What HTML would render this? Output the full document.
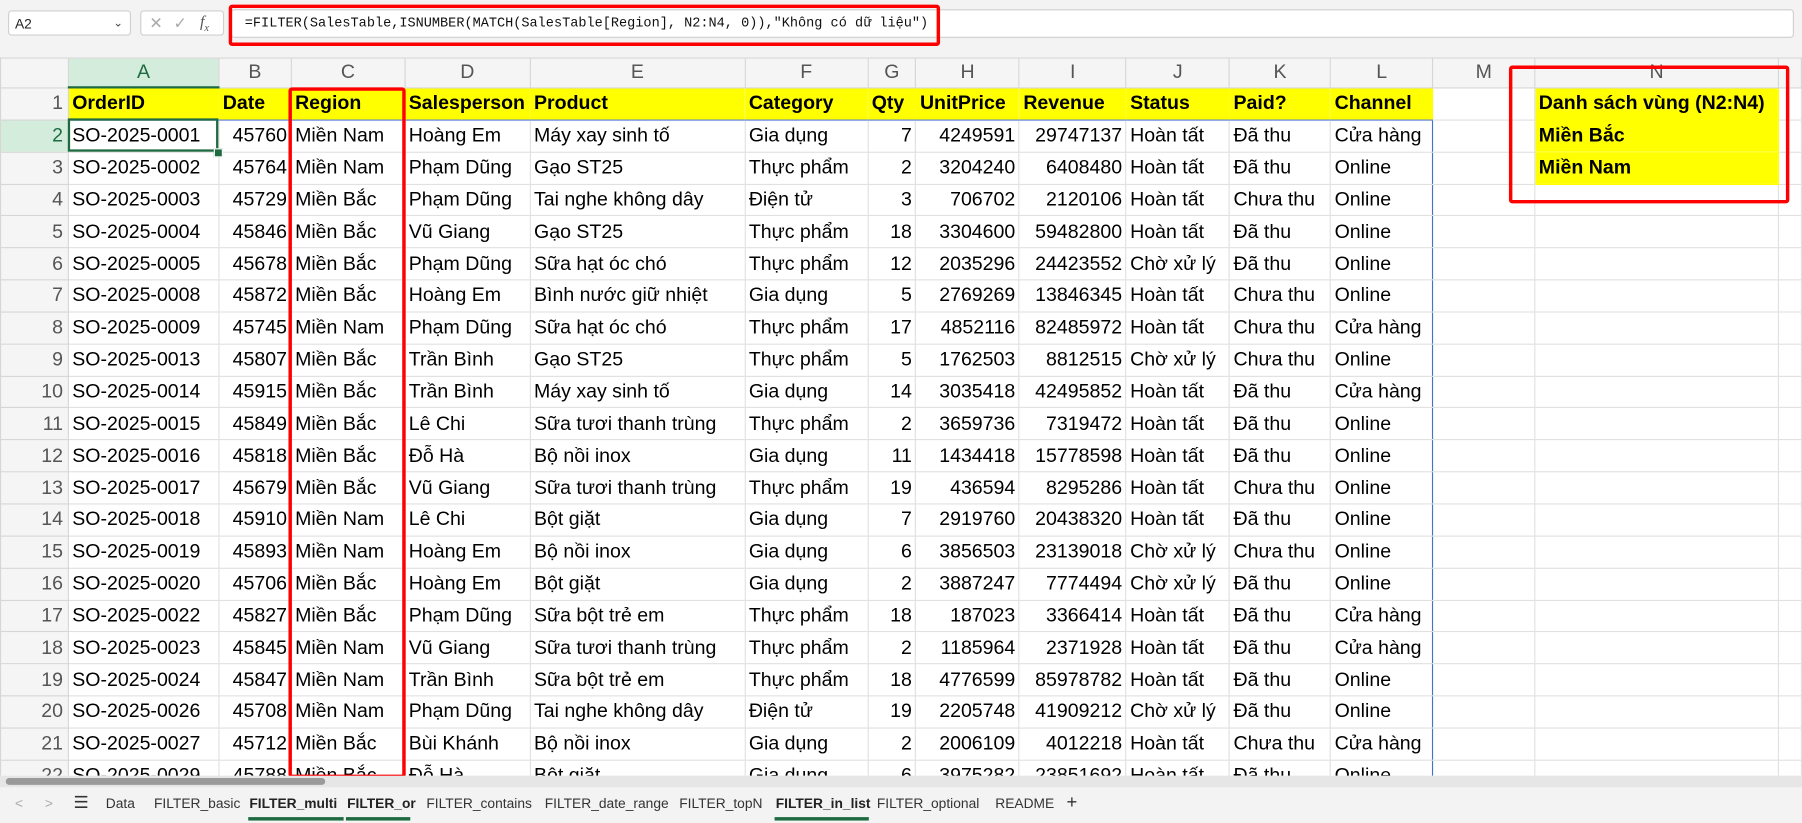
<!DOCTYPE html>
<html><head><meta charset="utf-8">
<style>
html,body{margin:0;padding:0;width:1802px;height:823px;overflow:hidden;background:#f3f3f3}
#w{position:absolute;left:0;top:0;width:1568px;height:716px;transform:scale(1.14923);transform-origin:0 0;font-family:"Liberation Sans",sans-serif;background:#f3f3f3}
.abs{position:absolute}
#sheet{position:absolute;left:0;top:50px;width:1568px;height:625px;overflow:hidden;background:#fff}
table{border-collapse:collapse;table-layout:fixed;font-size:17px}
td{height:26.85px;padding:0 3px;border:1px solid #e1e1e1;white-space:nowrap;overflow:hidden;color:#000;line-height:26px}
tr.hd td{height:24px;line-height:24px}
td.r{text-align:right}
td.h{background:#f5f5f5;color:#555;text-align:center;border-color:#d6d6d6;font-size:17px}
td.rn{background:#f5f5f5;color:#555;text-align:right;padding-right:4px;border-color:#d6d6d6}
tr.y td.c{background:#ffff00;font-weight:bold;border-color:#ffff00;border-bottom:1px solid #5b7fd6}
td.yl{background:#ffff00;font-weight:bold;border-color:#ffff00}
td.bl{border-right:1px solid #4472c4}
.tab{position:absolute;top:690px;font-size:12px;color:#333;line-height:18px;white-space:nowrap}
.tab.b{font-weight:bold;color:#222}
.ul{position:absolute;top:711px;height:3px;background:#1e6b41}
</style></head><body>
<div id="w">
<div class="abs" style="left:7px;top:9px;width:107px;height:22px;background:#fff;border:1px solid #d0d0d0;border-radius:3px;font-size:12px;line-height:22px;color:#222;box-sizing:border-box;padding-left:5px">A2<span style="position:absolute;right:6px;top:0;color:#444;font-size:10px">&#8964;</span></div>
<div class="abs" style="left:122px;top:9px;width:73px;height:22px;background:#fff;border:1px solid #d0d0d0;border-radius:3px;box-sizing:border-box;color:#aaa;font-size:14px;line-height:20px">
<span class="abs" style="left:7px">✕</span><span class="abs" style="left:28px">✓</span><span class="abs" style="left:51px;color:#555;font-style:italic;font-family:'Liberation Serif',serif">f<sub style="font-size:9px">x</sub></span></div>
<div class="abs" style="left:201px;top:8px;width:1360px;height:25px;background:#fff;border:1px solid #d0d0d0;border-radius:3px;box-sizing:border-box"></div>
<div class="abs" style="left:213px;top:11px;font-family:'Liberation Mono',monospace;font-size:11.8px;line-height:18px;color:#111;white-space:nowrap">=FILTER(SalesTable,ISNUMBER(MATCH(SalesTable[Region], N2:N4, 0)),"Không có dữ liệu")</div>
<div class="abs" style="left:199px;top:4px;width:619px;height:36px;border:3px solid #f00;border-radius:3px;box-sizing:border-box"></div>

<div id="sheet">
<table>
<colgroup><col style="width:59px"><col style="width:131px"><col style="width:63px"><col style="width:99px"><col style="width:109px"><col style="width:187px"><col style="width:107px"><col style="width:42px"><col style="width:90px"><col style="width:93px"><col style="width:90px"><col style="width:88px"><col style="width:89px"><col style="width:89px"><col style="width:212px"><col style="width:20px"></colgroup>
<tr class="hd"><td class="h" style="background:#f5f5f5"></td><td class="h" style="background:#d3ecdc;color:#1e6b41;border-bottom:2px solid #1e6b41">A</td><td class="h">B</td><td class="h">C</td><td class="h">D</td><td class="h">E</td><td class="h">F</td><td class="h">G</td><td class="h">H</td><td class="h">I</td><td class="h">J</td><td class="h">K</td><td class="h">L</td><td class="h">M</td><td class="h">N</td><td class="h"></td></tr>
<tr class="y"><td class="rn">1</td><td class="c">OrderID</td><td class="c">Date</td><td class="c">Region</td><td class="c">Salesperson</td><td class="c">Product</td><td class="c">Category</td><td class="c">Qty</td><td class="c">UnitPrice</td><td class="c">Revenue</td><td class="c">Status</td><td class="c">Paid?</td><td class="c">Channel</td><td></td><td class="yl">Danh sách vùng (N2:N4)</td><td></td></tr>
<tr><td class="rn" style="background:#d3ecdc;color:#1e6b41">2</td><td>SO-2025-0001</td><td class="r">45760</td><td>Miền Nam</td><td>Hoàng Em</td><td>Máy xay sinh tố</td><td>Gia dụng</td><td class="r">7</td><td class="r">4249591</td><td class="r">29747137</td><td>Hoàn tất</td><td>Đã thu</td><td class="bl">Cửa hàng</td><td></td><td class="yl">Miền Bắc</td><td></td></tr>
<tr><td class="rn">3</td><td>SO-2025-0002</td><td class="r">45764</td><td>Miền Nam</td><td>Phạm Dũng</td><td>Gạo ST25</td><td>Thực phẩm</td><td class="r">2</td><td class="r">3204240</td><td class="r">6408480</td><td>Hoàn tất</td><td>Đã thu</td><td class="bl">Online</td><td></td><td class="yl">Miền Nam</td><td></td></tr>
<tr><td class="rn">4</td><td>SO-2025-0003</td><td class="r">45729</td><td>Miền Bắc</td><td>Phạm Dũng</td><td>Tai nghe không dây</td><td>Điện tử</td><td class="r">3</td><td class="r">706702</td><td class="r">2120106</td><td>Hoàn tất</td><td>Chưa thu</td><td class="bl">Online</td><td></td><td></td><td></td></tr>
<tr><td class="rn">5</td><td>SO-2025-0004</td><td class="r">45846</td><td>Miền Bắc</td><td>Vũ Giang</td><td>Gạo ST25</td><td>Thực phẩm</td><td class="r">18</td><td class="r">3304600</td><td class="r">59482800</td><td>Hoàn tất</td><td>Đã thu</td><td class="bl">Online</td><td></td><td></td><td></td></tr>
<tr><td class="rn">6</td><td>SO-2025-0005</td><td class="r">45678</td><td>Miền Bắc</td><td>Phạm Dũng</td><td>Sữa hạt óc chó</td><td>Thực phẩm</td><td class="r">12</td><td class="r">2035296</td><td class="r">24423552</td><td>Chờ xử lý</td><td>Đã thu</td><td class="bl">Online</td><td></td><td></td><td></td></tr>
<tr><td class="rn">7</td><td>SO-2025-0008</td><td class="r">45872</td><td>Miền Bắc</td><td>Hoàng Em</td><td>Bình nước giữ nhiệt</td><td>Gia dụng</td><td class="r">5</td><td class="r">2769269</td><td class="r">13846345</td><td>Hoàn tất</td><td>Chưa thu</td><td class="bl">Online</td><td></td><td></td><td></td></tr>
<tr><td class="rn">8</td><td>SO-2025-0009</td><td class="r">45745</td><td>Miền Nam</td><td>Phạm Dũng</td><td>Sữa hạt óc chó</td><td>Thực phẩm</td><td class="r">17</td><td class="r">4852116</td><td class="r">82485972</td><td>Hoàn tất</td><td>Chưa thu</td><td class="bl">Cửa hàng</td><td></td><td></td><td></td></tr>
<tr><td class="rn">9</td><td>SO-2025-0013</td><td class="r">45807</td><td>Miền Bắc</td><td>Trần Bình</td><td>Gạo ST25</td><td>Thực phẩm</td><td class="r">5</td><td class="r">1762503</td><td class="r">8812515</td><td>Chờ xử lý</td><td>Chưa thu</td><td class="bl">Online</td><td></td><td></td><td></td></tr>
<tr><td class="rn">10</td><td>SO-2025-0014</td><td class="r">45915</td><td>Miền Bắc</td><td>Trần Bình</td><td>Máy xay sinh tố</td><td>Gia dụng</td><td class="r">14</td><td class="r">3035418</td><td class="r">42495852</td><td>Hoàn tất</td><td>Đã thu</td><td class="bl">Cửa hàng</td><td></td><td></td><td></td></tr>
<tr><td class="rn">11</td><td>SO-2025-0015</td><td class="r">45849</td><td>Miền Bắc</td><td>Lê Chi</td><td>Sữa tươi thanh trùng</td><td>Thực phẩm</td><td class="r">2</td><td class="r">3659736</td><td class="r">7319472</td><td>Hoàn tất</td><td>Đã thu</td><td class="bl">Online</td><td></td><td></td><td></td></tr>
<tr><td class="rn">12</td><td>SO-2025-0016</td><td class="r">45818</td><td>Miền Bắc</td><td>Đỗ Hà</td><td>Bộ nồi inox</td><td>Gia dụng</td><td class="r">11</td><td class="r">1434418</td><td class="r">15778598</td><td>Hoàn tất</td><td>Đã thu</td><td class="bl">Online</td><td></td><td></td><td></td></tr>
<tr><td class="rn">13</td><td>SO-2025-0017</td><td class="r">45679</td><td>Miền Bắc</td><td>Vũ Giang</td><td>Sữa tươi thanh trùng</td><td>Thực phẩm</td><td class="r">19</td><td class="r">436594</td><td class="r">8295286</td><td>Hoàn tất</td><td>Chưa thu</td><td class="bl">Online</td><td></td><td></td><td></td></tr>
<tr><td class="rn">14</td><td>SO-2025-0018</td><td class="r">45910</td><td>Miền Nam</td><td>Lê Chi</td><td>Bột giặt</td><td>Gia dụng</td><td class="r">7</td><td class="r">2919760</td><td class="r">20438320</td><td>Hoàn tất</td><td>Đã thu</td><td class="bl">Online</td><td></td><td></td><td></td></tr>
<tr><td class="rn">15</td><td>SO-2025-0019</td><td class="r">45893</td><td>Miền Nam</td><td>Hoàng Em</td><td>Bộ nồi inox</td><td>Gia dụng</td><td class="r">6</td><td class="r">3856503</td><td class="r">23139018</td><td>Chờ xử lý</td><td>Chưa thu</td><td class="bl">Online</td><td></td><td></td><td></td></tr>
<tr><td class="rn">16</td><td>SO-2025-0020</td><td class="r">45706</td><td>Miền Bắc</td><td>Hoàng Em</td><td>Bột giặt</td><td>Gia dụng</td><td class="r">2</td><td class="r">3887247</td><td class="r">7774494</td><td>Chờ xử lý</td><td>Đã thu</td><td class="bl">Online</td><td></td><td></td><td></td></tr>
<tr><td class="rn">17</td><td>SO-2025-0022</td><td class="r">45827</td><td>Miền Bắc</td><td>Phạm Dũng</td><td>Sữa bột trẻ em</td><td>Thực phẩm</td><td class="r">18</td><td class="r">187023</td><td class="r">3366414</td><td>Hoàn tất</td><td>Đã thu</td><td class="bl">Cửa hàng</td><td></td><td></td><td></td></tr>
<tr><td class="rn">18</td><td>SO-2025-0023</td><td class="r">45845</td><td>Miền Nam</td><td>Vũ Giang</td><td>Sữa tươi thanh trùng</td><td>Thực phẩm</td><td class="r">2</td><td class="r">1185964</td><td class="r">2371928</td><td>Hoàn tất</td><td>Đã thu</td><td class="bl">Cửa hàng</td><td></td><td></td><td></td></tr>
<tr><td class="rn">19</td><td>SO-2025-0024</td><td class="r">45847</td><td>Miền Nam</td><td>Trần Bình</td><td>Sữa bột trẻ em</td><td>Thực phẩm</td><td class="r">18</td><td class="r">4776599</td><td class="r">85978782</td><td>Hoàn tất</td><td>Đã thu</td><td class="bl">Online</td><td></td><td></td><td></td></tr>
<tr><td class="rn">20</td><td>SO-2025-0026</td><td class="r">45708</td><td>Miền Nam</td><td>Phạm Dũng</td><td>Tai nghe không dây</td><td>Điện tử</td><td class="r">19</td><td class="r">2205748</td><td class="r">41909212</td><td>Chờ xử lý</td><td>Đã thu</td><td class="bl">Online</td><td></td><td></td><td></td></tr>
<tr><td class="rn">21</td><td>SO-2025-0027</td><td class="r">45712</td><td>Miền Bắc</td><td>Bùi Khánh</td><td>Bộ nồi inox</td><td>Gia dụng</td><td class="r">2</td><td class="r">2006109</td><td class="r">4012218</td><td>Hoàn tất</td><td>Chưa thu</td><td class="bl">Cửa hàng</td><td></td><td></td><td></td></tr>
<tr><td class="rn">22</td><td>SO-2025-0029</td><td class="r">45788</td><td>Miền Bắc</td><td>Đỗ Hà</td><td>Bột giặt</td><td>Gia dụng</td><td class="r">6</td><td class="r">3975282</td><td class="r">23851692</td><td>Hoàn tất</td><td>Đã thu</td><td class="bl">Online</td><td></td><td></td><td></td></tr>
</table>
<div class="abs" style="left:59px;top:53px;width:131px;height:29px;border:2px solid #1e6b41;box-sizing:border-box"></div>
<div class="abs" style="left:186px;top:79px;width:6px;height:6px;background:#1e6b41;border:1px solid #fff"></div>
<div class="abs" style="left:1313px;top:7px;width:244px;height:120px;border:3px solid #f00;border-radius:3px;box-sizing:border-box"></div>
</div>
<div class="abs" style="left:251px;top:76px;width:102px;height:601px;border:3px solid #f00;border-radius:3px;box-sizing:border-box"></div>
<div class="abs" style="left:0;top:675px;width:1568px;height:10px;background:#e6e6e6"></div>
<div class="abs" style="left:5px;top:677px;width:278px;height:6px;background:#9a9a9a;border-radius:3px"></div>
<div class="tab" style="left:13px;color:#aaa">&lt;</div>
<div class="tab" style="left:39px;color:#aaa">&gt;</div>
<div class="tab" style="left:64px;font-size:15px">☰</div>
<div class="tab" style="left:92px">Data</div>
<div class="tab" style="left:134px">FILTER_basic</div>
<div class="tab b" style="left:217px">FILTER_multi</div>
<div class="tab b" style="left:302px">FILTER_or</div>
<div class="tab" style="left:371px">FILTER_contains</div>
<div class="tab" style="left:474px">FILTER_date_range</div>
<div class="tab" style="left:591px">FILTER_topN</div>
<div class="tab b" style="left:675px">FILTER_in_list</div>
<div class="tab" style="left:763px">FILTER_optional</div>
<div class="tab" style="left:866px">README</div>
<div class="tab" style="left:928px;font-size:16px">+</div>
<div class="ul" style="left:216px;width:83px"></div>
<div class="ul" style="left:301px;width:56px"></div>
<div class="ul" style="left:674px;width:82px"></div>
</div>
</body></html>
